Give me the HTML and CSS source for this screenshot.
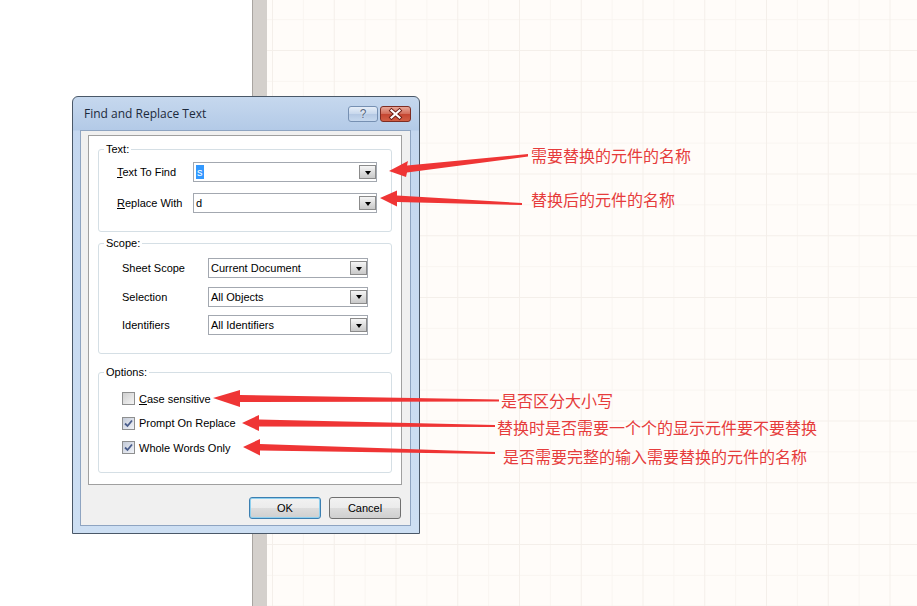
FILE: index.html
```html
<!DOCTYPE html>
<html lang="zh-CN">
<head>
    <meta charset="UTF-8">
    <meta name="viewport" content="width=device-width, initial-scale=1.0">
    <title>Find and Replace Text</title>
    <link rel="stylesheet" href="styles.css">
</head>
<body>
    <div class="desktop">
        <div class="blank"></div>
        <div class="ruler"></div>
        <div class="sheet"></div>
    </div>

    <div class="dialog">
        <div class="titlebar">
            <span class="title">Find and Replace Text</span>
            <div class="caption-buttons">
                <span class="cap-btn help">?</span>
                <span class="cap-btn close">
                    <svg width="29" height="14" viewBox="0 0 29 14">
                        <path d="M10.5 3.5 L18.5 10.5 M18.5 3.5 L10.5 10.5" stroke="#6b1c14" stroke-width="4" stroke-linecap="square"/>
                        <path d="M10.5 3.5 L18.5 10.5 M18.5 3.5 L10.5 10.5" stroke="#fff" stroke-width="2.2" stroke-linecap="square"/>
                    </svg>
                </span>
            </div>
        </div>

        <div class="client">
            <div class="panel">
                <fieldset class="group group-text">
                    <legend>Text:</legend>
                    <div class="row">
                        <label><u>T</u>ext To Find</label>
                        <div class="combo"><span class="value"><span class="selected">s</span></span><span class="drop"></span></div>
                    </div>
                    <div class="row">
                        <label><u>R</u>eplace With</label>
                        <div class="combo"><span class="value">d</span><span class="drop"></span></div>
                    </div>
                </fieldset>

                <fieldset class="group group-scope">
                    <legend>Scope:</legend>
                    <div class="row">
                        <label>Sheet Scope</label>
                        <div class="combo"><span class="value">Current Document</span><span class="drop"></span></div>
                    </div>
                    <div class="row">
                        <label>Selection</label>
                        <div class="combo"><span class="value">All Objects</span><span class="drop"></span></div>
                    </div>
                    <div class="row">
                        <label>Identifiers</label>
                        <div class="combo"><span class="value">All Identifiers</span><span class="drop"></span></div>
                    </div>
                </fieldset>

                <fieldset class="group group-options">
                    <legend>Options:</legend>
                    <div class="check-row">
                        <span class="checkbox"></span>
                        <span><u>C</u>ase sensitive</span>
                    </div>
                    <div class="check-row">
                        <span class="checkbox checked">
                            <svg width="11" height="11" viewBox="0 0 11 11"><path d="M2 5.5 L4.5 8 L9 2.5" fill="none" stroke="#4a5d8c" stroke-width="1.8"/></svg>
                        </span>
                        <span>Prompt On Replace</span>
                    </div>
                    <div class="check-row">
                        <span class="checkbox checked">
                            <svg width="11" height="11" viewBox="0 0 11 11"><path d="M2 5.5 L4.5 8 L9 2.5" fill="none" stroke="#4a5d8c" stroke-width="1.8"/></svg>
                        </span>
                        <span>Whole Words Only</span>
                    </div>
                </fieldset>
            </div>

            <div class="buttons">
                <button class="btn default">OK</button>
                <button class="btn">Cancel</button>
            </div>
        </div>
    </div>

    <!-- annotation arrows drawn over the screenshot -->
    <svg class="arrows" width="917" height="606" viewBox="0 0 917 606">
        <polygon points="528,154 407,165.5 408,161 389,171 406,177 407,172.5 528,156.5"/>
        <polygon points="522,203 397,195.5 397,190.5 380,198 397,206.5 397,202 522,205"/>
        <polygon points="499,399.5 240,395 240,390 213,398 240,407 240,402 499,401.5"/>
        <polygon points="495,425 259,419.5 259,415 242,423 259,431 259,426.5 495,427"/>
        <polygon points="495,452 260,444 260,439 243,447 260,455.5 260,450.5 495,454"/>
    </svg>

    <span class="note n1">需要替换的元件的名称</span>
    <span class="note n2">替换后的元件的名称</span>
    <span class="note n3">是否区分大小写</span>
    <span class="note n4">替换时是否需要一个个的显示元件要不要替换</span>
    <span class="note n5">是否需要完整的输入需要替换的元件的名称</span>
</body>
</html>
```

FILE: styles.css
```css
* {
    box-sizing: border-box;
}

body {
    margin: 0;
    width: 917px;
    height: 606px;
    overflow: hidden;
    position: relative;
    font-family: "Liberation Sans", Arial, sans-serif;
    font-size: 11px;
    color: #000;
}

.desktop {
    display: flex;
    height: 606px;
}

.blank {
    width: 252px;
    background-color: #fff;
}

.ruler {
    width: 15px;
    background-color: #d4d0cc;
    border-left: 1px solid #a9a5a1;
}

.sheet {
    flex: 1;
    background-color: #fffcf9;
    background-image:
        linear-gradient(to right, #f4efea 1px, transparent 1px),
        linear-gradient(to bottom, #f4efea 1px, transparent 1px),
        linear-gradient(to right, #f9f5f1 1px, transparent 1px),
        linear-gradient(to bottom, #f9f5f1 1px, transparent 1px);
    background-size: 61.75px 61.75px;
    background-position: 5px 0, 0 50px, 35.9px 0, 0 19.1px;
}

/* dialog window */
.dialog {
    position: absolute;
    left: 72px;
    top: 96px;
    width: 348px;
    height: 438px;
    border: 1px solid #4a5868;
    border-radius: 6px 6px 0 0;
    background: linear-gradient(to bottom, #c6d8ee 0, #b3cae7 33px, #c4d7ef 34px, #cddff3 100%);
    display: flex;
    flex-direction: column;
}

.titlebar {
    height: 33px;
    display: flex;
    align-items: center;
    justify-content: space-between;
    padding: 0 8px 0 11px;
}

.title {
    font-family: "Open Sans", "Liberation Sans", sans-serif;
    font-size: 12px;
    color: #1c2a3c;
}

.caption-buttons {
    display: flex;
    gap: 2px;
    align-self: flex-start;
    margin-top: 9px;
}

.cap-btn {
    height: 16px;
    border-radius: 3px;
    display: flex;
    align-items: center;
    justify-content: center;
}

.help {
    width: 30px;
    border: 1px solid #7690b2;
    background: linear-gradient(to bottom, #e6eef8, #c7d7ec 50%, #b4c8e3 51%, #c6d8ee);
    color: #56677f;
    font-family: "Liberation Sans", sans-serif;
    font-size: 12px;
    text-shadow: 0 0 2px #fff;
}

.close {
    width: 31px;
    border: 1px solid #7e2c22;
    background: linear-gradient(to bottom, #e8a798, #d26b58 50%, #c44531 51%, #d25f45);
}

.client {
    flex: 1;
    margin: 0 8px 7px 7px;
    border: 1px solid #8ea4c1;
    background-color: #f0f0f0;
    padding: 4px 0 0 7px;
}

.panel {
    width: 314px;
    height: 350px;
    border: 1px solid #a0a0a0;
    background-color: #fff;
    padding: 6px 0 0 9px;
}

/* group boxes */
.group {
    width: 294px;
    margin: 0;
    border: 1px solid #d5dfe5;
    border-radius: 3px;
    padding: 0;
}

.group legend {
    margin-left: 5px;
    padding: 0 2px;
    font-size: 11px;
    line-height: 14px;
    color: #000;
}

.group-text {
    padding: 6px 0 18px;
}

.group-scope {
    margin-top: 4px;
    padding: 8px 0 18px;
}

.group-options {
    margin-top: 11px;
    padding: 11.5px 0 16px;
}

.row {
    display: grid;
    align-items: center;
    height: 20px;
}

.group-text .row {
    grid-template-columns: 76px 184px;
    margin-left: 18px;
}

.group-text .row + .row {
    margin-top: 11px;
}

.group-scope .row {
    grid-template-columns: 86px 160px;
    margin-left: 23px;
}

.group-scope .row + .row {
    margin-top: 8.5px;
}

.combo {
    height: 20px;
    border: 1px solid #a3a8b0;
    background-color: #fff;
    display: flex;
    align-items: center;
    justify-content: space-between;
    padding-left: 2px;
}

.value {
    line-height: 14px;
}

.selected {
    background-color: #3399ff;
    color: #fff;
    padding: 1px 1px;
}

.drop {
    width: 17px;
    height: 14px;
    border: 1px solid #8b8b8b;
    background: linear-gradient(to bottom, #f6f6f6, #dcdcdc 55%, #c9c9c9);
    display: flex;
    align-items: center;
    justify-content: center;
}

.drop::after {
    content: "";
    border-left: 3.5px solid transparent;
    border-right: 3.5px solid transparent;
    border-top: 4px solid #000;
    margin-top: 1px;
}

/* checkboxes */
.check-row {
    display: flex;
    align-items: center;
    gap: 4px;
    height: 16px;
    margin-left: 23px;
}

.check-row + .check-row {
    margin-top: 8.5px;
}

.checkbox {
    width: 13px;
    height: 13px;
    border: 1px solid #8e8f8f;
    background: linear-gradient(135deg, #cfcfcf, #f4f4f4);
    display: flex;
    align-items: center;
    justify-content: center;
}

.checkbox.checked {
    background: linear-gradient(135deg, #c4cbd8, #f1f3f8);
}

/* bottom buttons */
.buttons {
    display: flex;
    justify-content: flex-end;
    gap: 8px;
    margin-top: 12px;
    padding-right: 9px;
}

.btn {
    width: 72px;
    height: 22px;
    border: 1px solid #707070;
    border-radius: 3px;
    background: linear-gradient(to bottom, #f2f2f2, #ebebeb 50%, #dddddd 51%, #cfcfcf);
    font-family: "Liberation Sans", Arial, sans-serif;
    font-size: 11px;
    color: #000;
    padding: 0;
}

.btn.default {
    border-color: #3c7fb1;
    box-shadow: inset 0 0 0 1px #8fd0ef;
}

/* annotations */
.arrows {
    position: absolute;
    left: 0;
    top: 0;
    pointer-events: none;
}

.arrows polygon {
    fill: #ef3535;
}

.note {
    position: absolute;
    font-family: "Noto Sans CJK SC", sans-serif;
    font-size: 16px;
    line-height: 18px;
    color: #e63c3c;
    white-space: nowrap;
}

.n1 { left: 531px; top: 146px; }
.n2 { left: 531px; top: 190px; }
.n3 { left: 501px; top: 391px; }
.n4 { left: 497px; top: 418px; }
.n5 { left: 503px; top: 447px; }
```
